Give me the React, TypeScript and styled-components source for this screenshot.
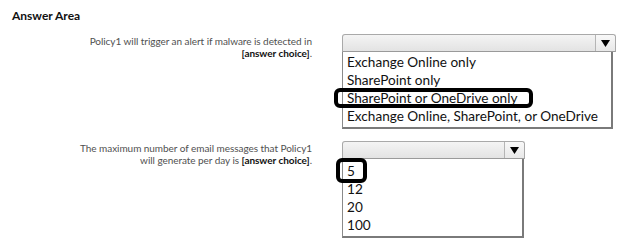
import React from "react";
import styled, { createGlobalStyle } from "styled-components";

const Global = createGlobalStyle`
  html, body { margin: 0; padding: 0; background: #fff; }
  body { width: 624px; height: 248px; overflow: hidden; }
`;

const Page = styled.div`
  padding: 9px 0 0 12px;
  font-family: "Lato", "Noto Sans", sans-serif;
`;

const Title = styled.div`
  font-size: 12px;
  font-weight: 700;
  color: #111;
  line-height: 14px;
`;

const Rows = styled.div`
  display: flex;
  flex-direction: column;
  gap: 12px;
  margin-top: 11px;
`;

const Row = styled.div`
  display: grid;
  grid-template-columns: 300px auto;
  column-gap: 30px;
  align-items: start;
`;

const Prompt = styled.div`
  text-align: right;
  font-size: 10px;
  line-height: 12px;
  color: #505050;
  padding-top: 1px;
  letter-spacing: -0.05px;
  b { color: #111; font-weight: 700; }
`;

const Dropdown = styled.div<{ $w: number; $listW: number }>`
  width: ${(p) => p.$w}px;
  display: flex;
  flex-direction: column;
  .list { width: ${(p) => p.$listW}px; }
`;

const Select = styled.div`
  height: 18px;
  box-sizing: border-box;
  border: 1px solid #a9a9a9;
  border-bottom-color: #9a9a9a;
  border-radius: 3px 3px 0 0;
  background: linear-gradient(#f4f4f4, #e3e3e3);
  display: flex;
  justify-content: flex-end;
`;

const ArrowBtn = styled.div`
  width: 19px;
  border-left: 1px solid #b5b5b5;
  display: flex;
  align-items: center;
  justify-content: center;
  background: linear-gradient(#f8f8f8, #e8e8e8);
  border-radius: 0 3px 0 0;
`;

const List = styled.div<{ $pt: number }>`
  box-sizing: border-box;
  border: 1px solid #8a8a8a;
  border-top: none;
  border-right: 2px solid #7a7a7a;
  border-bottom: 2px solid #7a7a7a;
  padding: ${(p) => p.$pt}px 0 2px 4px;
  background: #fff;
  font-family: "Lato", "Liberation Sans", sans-serif;
  font-size: 13.6px;
  color: #111;
`;

const Item = styled.div<{ $h: number }>`
  position: relative;
  height: ${(p) => p.$h}px;
  line-height: ${(p) => p.$h}px;
  white-space: nowrap;
`;

const Ring = styled.span<{ $l: number; $t: number; $w: number; $h: number }>`
  position: absolute;
  left: ${(p) => p.$l}px;
  top: ${(p) => p.$t}px;
  width: ${(p) => p.$w}px;
  height: ${(p) => p.$h}px;
  box-sizing: border-box;
  border: 4px solid #000;
  border-radius: 6px;
  pointer-events: none;
`;

const Arrow = () => (
  <svg width="9" height="7" viewBox="0 0 9 7">
    <path d="M0 0 H9 L4.5 7 Z" fill="#000" />
  </svg>
);

export default function App() {
  return (
    <>
      <Global />
      <Page>
        <Title>Answer Area</Title>
        <Rows>
          <Row>
            <Prompt>
              Policy1 will trigger an alert if malware is detected in
              <br />
              <b>[answer choice]</b>.
            </Prompt>
            <Dropdown $w={274} $listW={271}>
              <Select>
                <ArrowBtn>
                  <Arrow />
                </ArrowBtn>
              </Select>
              <List className="list" $pt={1}>
                <Item $h={18}>Exchange Online only</Item>
                <Item $h={18}>SharePoint only</Item>
                <Item $h={18}>
                  SharePoint or OneDrive only
                  <Ring $l={-13} $t={-1} $w={199} $h={20} />
                </Item>
                <Item $h={18}>Exchange Online, SharePoint, or OneDrive</Item>
              </List>
            </Dropdown>
          </Row>
          <Row>
            <Prompt>
              The maximum number of email messages that Policy1
              <br />
              will generate per day is <b>[answer choice]</b>.
            </Prompt>
            <Dropdown $w={183} $listW={182}>
              <Select>
                <ArrowBtn>
                  <Arrow />
                </ArrowBtn>
              </Select>
              <List className="list" $pt={3}>
                <Item $h={18}>
                  5
                  <Ring $l={-11} $t={-4} $w={31} $h={25} />
                </Item>
                <Item $h={18}>12</Item>
                <Item $h={18}>20</Item>
                <Item $h={18}>100</Item>
              </List>
            </Dropdown>
          </Row>
        </Rows>
      </Page>
    </>
  );
}
